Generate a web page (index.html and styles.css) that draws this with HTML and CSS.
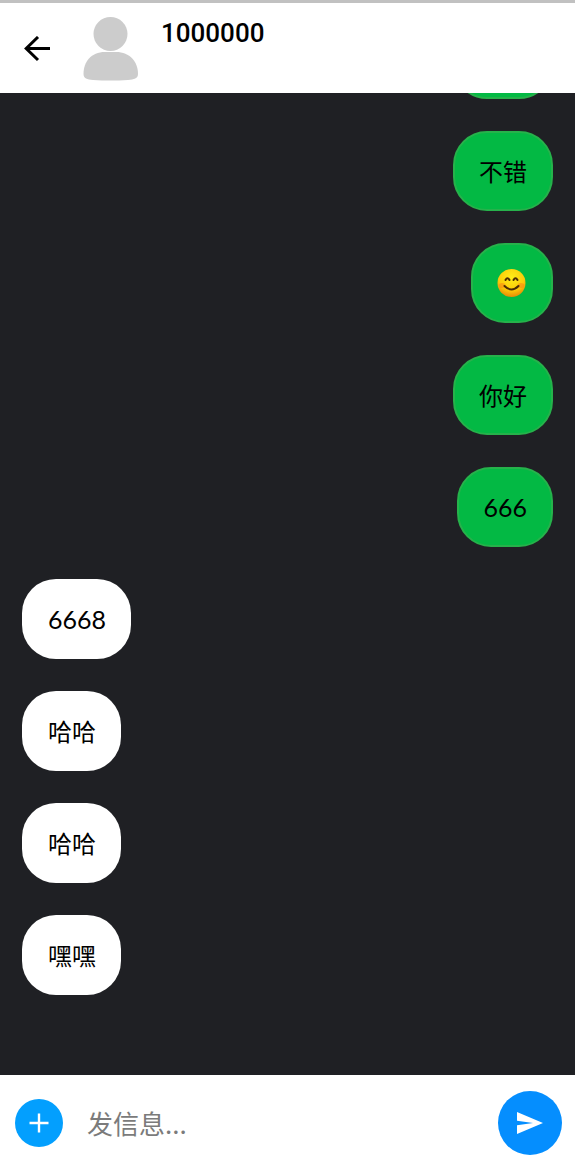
FILE: index.html
```html
<!DOCTYPE html>
<html lang="zh-CN">
<head>
<meta charset="utf-8">
<meta name="viewport" content="width=device-width, initial-scale=1">
<title>1000000</title>
<link rel="stylesheet" href="styles.css">
</head>
<body>
<div class="app">
  <header class="header">
    <button class="back" type="button" aria-label="返回">
      <svg width="26" height="26" viewBox="0 0 26 26" fill="none" stroke="#000" stroke-width="3"><path d="M26 12.500H3M14 1L2.200 12.500L14 24"/></svg>
    </button>
    <svg class="avatar" width="56" height="64" viewBox="0 0 56 64" fill="#cccccc" aria-hidden="true">
      <circle cx="27.5" cy="17" r="17"/>
      <path d="M22 35H33C47 35 55 45 55 57C55 61.500 51 62.500 45 63Q27.500 64 10 63C4 62.500 .5 61.500 .5 57C.5 45 8 35 22 35Z"/>
    </svg>
    <h1 class="name">1000000</h1>
  </header>
  <main class="chat">
    <div class="bubble sent clipped"></div>
    <div class="bubble sent">不错</div>
    <div class="bubble sent">
      <svg class="emoji" width="30" height="30" viewBox="0 0 30 30" role="img" aria-label="微笑">
        <defs>
          <radialGradient id="face" cx=".5" cy=".3" r=".7"><stop offset="0" stop-color="#ffed18"/><stop offset=".65" stop-color="#fccb09"/><stop offset="1" stop-color="#e68a05"/></radialGradient>
        </defs>
        <circle cx="14.500" cy="15" r="14" fill="url(#face)"/>
        <ellipse cx="5" cy="17.500" rx="3.500" ry="2.500" fill="#f98b16" opacity=".6"/>
        <ellipse cx="24" cy="17.500" rx="3.500" ry="2.500" fill="#f98b16" opacity=".6"/>
        <path d="M8.500 12Q10.500 8.500 12.500 12M16.500 12Q18.500 8.500 20.500 12" fill="none" stroke="#4b2b04" stroke-width="2" stroke-linecap="round"/>
        <path d="M7.500 18Q14.500 25 21.500 18" fill="none" stroke="#4b2b04" stroke-width="2" stroke-linecap="round"/>
      </svg>
    </div>
    <div class="bubble sent">你好</div>
    <div class="bubble sent number">666</div>
    <div class="bubble number">6668</div>
    <div class="bubble">哈哈</div>
    <div class="bubble">哈哈</div>
    <div class="bubble">嘿嘿</div>
  </main>
  <form class="composer">
    <button class="round add" type="button" aria-label="添加">
      <svg width="20" height="20" viewBox="0 0 20 20" fill="none" stroke="#fff" stroke-width="2.400"><path d="M10 .5V19.500M.5 10H19.500"/></svg>
    </button>
    <input class="message" type="text" placeholder="发信息..." aria-label="发信息">
    <button class="round send" type="button" aria-label="发送">
      <svg width="26" height="22" viewBox="0 0 26 22" fill="#fff"><path d="M0 0L26 11L0 22V13.200L16 11L0 8.800Z"/></svg>
    </button>
  </form>
</div>
</body>
</html>
```
FILE: styles.css
```css
* {
  box-sizing: border-box;
}

body {
  margin: 0;
  font-family: "Noto Sans CJK SC", sans-serif;
  color: #000;
}

button {
  padding: 0;
  border: 0;
  background: none;
}

svg {
  display: block;
}

.app {
  display: flex;
  flex-direction: column;
  height: 100vh;
  background: #1f2024;
}

.header {
  display: flex;
  flex: none;
  align-items: flex-start;
  padding: 14px 24px 12px;
  border-top: 3px solid #c1c1c1;
  background: #fff;
}

.back {
  align-self: center;
  margin-right: 33px;
}

.name {
  margin: 0 0 0 22px;
  font: 500 26px/32px Roboto, sans-serif;
}

.chat {
  display: flex;
  flex: 1;
  flex-direction: column;
  justify-content: flex-end;
  align-items: flex-start;
  gap: 32px;
  min-height: 0;
  padding: 0 22px 80px;
  overflow: hidden;
}

.bubble {
  display: flex;
  flex: none;
  align-items: center;
  height: 80px;
  padding: 0 25px 0 26px;
  border-radius: 34px;
  background: #fff;
  font-size: 24px;
  line-height: 36px;
}

.number {
  font-family: Lato, sans-serif;
  font-size: 25px;
}

.sent {
  align-self: flex-end;
  padding: 0 24px;
  border: 2px solid #26b24b;
  background: #03b944;
}

.clipped {
  width: 100px;
}

.composer {
  display: flex;
  flex: none;
  align-items: center;
  gap: 24px;
  padding: 16px 13px 13px 15px;
  background: #fff;
}

.round {
  display: grid;
  flex: none;
  place-items: center;
  border-radius: 50%;
}

.add {
  width: 48px;
  height: 48px;
  background: #039ffe;
}

.send {
  width: 64px;
  height: 64px;
  background: #058efe;
}

.message {
  flex: 1;
  min-width: 0;
  padding: 0;
  border: 0;
  outline: 0;
  background: none;
  font: 26px/38px "Noto Sans CJK SC", sans-serif;
}

.message::placeholder {
  color: #7b7b7b;
  opacity: 1;
}
```
